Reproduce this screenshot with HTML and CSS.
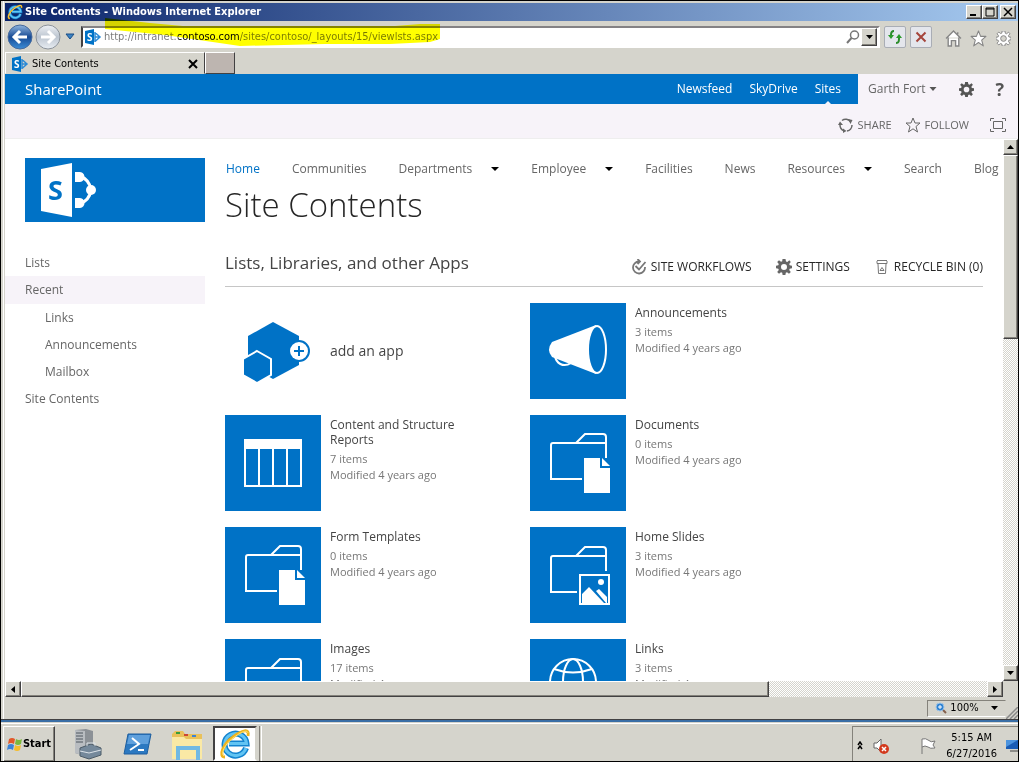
FILE: index.html
```html
<!DOCTYPE html>
<html lang="en">
<head>
    <meta charset="UTF-8">
    <meta name="viewport" content="width=device-width, initial-scale=1.0">
    <title>Site Contents</title>
    <link rel="stylesheet" href="styles.css">
</head>
<body>
    <svg class="sprite" aria-hidden="true">
        <symbol id="sp" viewBox="0 0 18 18">
            <path d="M1 3L10 1V17L1 15Z" fill="#0072c6"/>
            <text x="3" y="13" class="sp-letter">S</text>
            <path d="M11 4.500L16 9L11 13.500M11 9H15M11 4V14" fill="none" stroke="#2b8ad6" stroke-width="1.500"/>
        </symbol>
        <symbol id="ie" viewBox="0 0 32 32">
            <path d="M27 20A11 11 0 1 1 27.500 15.500H10" fill="none" stroke="#1484cf" stroke-width="6"/>
            <path d="M27 20A11 11 0 1 1 27.500 15.500H10" fill="none" stroke="#62c4f3" stroke-width="3"/>
            <path d="M6 29C-1 29 4 16 14 9C23 2 31 0 29 8" fill="none" stroke="#f0b41c" stroke-width="3"/>
            <path d="M5 28C1 26 6 16 14 10C22 4 28 1 29 5" fill="none" stroke="#fbe276" stroke-width="1"/>
        </symbol>
        <symbol id="gear" viewBox="0 0 16 16">
            <path fill-rule="evenodd" d="M6.500 0H9.500L10 2.500L11.300 3L13.300 1.300L14.800 3L13.200 5L13.700 6.300L16 6.700V9.300L13.700 9.800L13.200 11L14.800 13L13 14.800L11 13.300L9.800 13.800L9.400 16H6.600L6.200 13.800L5 13.300L3 14.800L1.200 13L2.800 11L2.300 9.800L0 9.300V6.700L2.300 6.300L2.800 5L1.200 3L3 1.200L5 2.800L6.200 2.300ZM8 5A3 3 0 1 0 8 11A3 3 0 1 0 8 5Z"/>
        </symbol>
        <symbol id="star" viewBox="0 0 16 16">
            <path d="M8 1L10 6H15L11 9.500L12.500 15L8 11.800L3.500 15L5 9.500L1 6H6Z" stroke-linejoin="round"/>
        </symbol>
        <symbol id="folder" viewBox="0 0 96 96">
            <path d="M52 64H21V30A2 2 0 0 1 23 28H76M46 28L55 19H73A3 3 0 0 1 76 22V43" fill="none" stroke="#fff" stroke-width="2"/>
        </symbol>
        <symbol id="folder-doc" viewBox="0 0 96 96">
            <use href="#folder"/>
            <path d="M54 43H70V53H80V78H54ZM72 43L80 51H72Z" fill="#fff"/>
        </symbol>
        <symbol id="folder-pic" viewBox="0 0 96 96">
            <use href="#folder" y="1"/>
            <path d="M47 45H82V80H47Z" fill="#0072c6"/>
            <path d="M50 48H79V77H50Z" fill="none" stroke="#fff" stroke-width="2"/>
            <circle cx="71" cy="55" r="3" fill="#fff"/>
            <path d="M52 67L59 60L74 76H52ZM66 64L69 62L77 70V76H76Z" fill="#fff"/>
        </symbol>
    </svg>

    <div class="desktop">
        <div class="window">
            <header class="titlebar">
                <svg class="icon16"><use href="#ie"/></svg>
                <span class="titlebar-text">Site Contents - Windows Internet Explorer</span>
                <div class="window-buttons">
                    <button class="bevel" aria-label="Minimize"><svg viewBox="0 0 12 10"><path d="M2 8H8" stroke="#000" stroke-width="2"/></svg></button>
                    <button class="bevel" aria-label="Maximize"><svg viewBox="0 0 12 10"><path d="M2 1H10V9H2ZM2 2H10" fill="none" stroke="#000"/></svg></button>
                    <button class="bevel close" aria-label="Close"><svg viewBox="0 0 12 10"><path d="M2 1L10 9M10 1L2 9" stroke="#000" stroke-width="1.500"/></svg></button>
                </div>
            </header>

            <div class="toolbar">
                <div class="history">
                    <button aria-label="Back">
                        <svg viewBox="0 0 26 26">
                            <defs><linearGradient id="back" x2="0" y2="1"><stop offset="0" stop-color="#91b6df"/><stop offset=".5" stop-color="#174a94"/><stop offset="1" stop-color="#3c8ed8"/></linearGradient></defs>
                            <circle cx="13" cy="13" r="12" fill="url(#back)" stroke="#476a9c"/>
                            <path d="M20 13H8M13 7L7 13L13 19" fill="none" stroke="#fff" stroke-width="3"/>
                        </svg>
                    </button>
                    <button aria-label="Forward">
                        <svg viewBox="0 0 26 26">
                            <defs><linearGradient id="fwd" x2="0" y2="1"><stop offset="0" stop-color="#eef1f5"/><stop offset=".5" stop-color="#bcc5d0"/><stop offset="1" stop-color="#e9eef3"/></linearGradient></defs>
                            <circle cx="13" cy="13" r="12" fill="url(#fwd)" stroke="#8c939b"/>
                            <path d="M6 13H18M13 7L19 13L13 19" fill="none" stroke="#fff" stroke-width="3"/>
                        </svg>
                    </button>
                    <button class="history-menu" aria-label="Recent pages"><svg viewBox="0 0 10 8"><path d="M1 1H9L5 6Z" fill="#3b83c4" stroke="#1b4e86"/></svg></button>
                </div>
                <div class="address">
                    <svg class="icon18"><use href="#sp"/></svg>
                    <input type="text" class="address-input" aria-label="Address" value="http://intranet.contoso.com/sites/contoso/_layouts/15/viewlsts.aspx">
                    <button class="search-button" aria-label="Search"><svg viewBox="0 0 16 16"><circle cx="9.500" cy="6" r="4" fill="none" stroke="#777" stroke-width="1.500"/><path d="M6.500 9L2 14" stroke="#777" stroke-width="2"/></svg></button>
                    <button class="bevel address-menu" aria-label="Show addresses"><svg viewBox="0 0 7 4"><path d="M0 0H7L3.500 4Z"/></svg></button>
                    <svg class="marker" viewBox="0 0 335 29" aria-hidden="true"><path d="M0 0L45 5L78 8H290L315 6H335V21L325 24L285 26H220L135 28L60 17L0 11Z" fill="#ff0"/></svg>
                </div>
                <button class="nav-button" aria-label="Refresh"><svg viewBox="0 0 16 16"><path d="M7 2C4 2 4 4 4 6M9 14C12 14 12 12 12 9" fill="none" stroke="#2a8b2a" stroke-width="2"/><path d="M1 6H7L4 10ZM9 9H15L12 5Z" fill="#2a9a2a"/></svg></button>
                <button class="nav-button" aria-label="Stop"><svg viewBox="0 0 16 16"><path d="M3.500 3.500L12.500 12.500M12.500 3.500L3.500 12.500" stroke="#a5453c" stroke-width="2"/></svg></button>
                <div class="commands">
                    <button aria-label="Home"><svg viewBox="0 0 16 16"><path d="M1 8L8 1L15 8M3 7V15H6V10H10V15H13V7M12 4V2" fill="#fff" stroke="#858585" stroke-width="1.300"/></svg></button>
                    <button aria-label="Favorites"><svg viewBox="0 0 16 16" fill="#fff" stroke="#858585"><use href="#star" width="16" height="16"/></svg></button>
                    <button aria-label="Tools"><svg viewBox="-1 -1 18 18" fill="#fff" stroke="#858585"><use href="#gear" width="16" height="16"/></svg></button>
                </div>
            </div>

            <div class="tabs">
                <div class="tab">
                    <svg class="icon18"><use href="#sp"/></svg>
                    <span class="tab-title">Site Contents</span>
                    <button aria-label="Close tab"><svg viewBox="0 0 10 10"><path d="M1 1L9 9M9 1L1 9" stroke="#000" stroke-width="2"/></svg></button>
                </div>
                <button class="new-tab" aria-label="New tab"></button>
            </div>

            <div class="suitebar">
                <div class="suitebar-blue">
                    <a href="#" class="brand">SharePoint</a>
                    <nav class="suite-links">
                        <a href="#">Newsfeed</a>
                        <a href="#">SkyDrive</a>
                        <a href="#" class="current">Sites</a>
                    </nav>
                </div>
                <div class="suitebar-user">
                    <button class="user">Garth Fort <svg viewBox="0 0 7 4"><path d="M0 0H7L3.500 4Z"/></svg></button>
                    <button aria-label="Settings" class="suite-gear"><svg><use href="#gear"/></svg></button>
                    <button aria-label="Help" class="help">?</button>
                </div>
            </div>

            <div class="ribbon">
                <button><svg viewBox="0 0 16 16" fill="none" stroke="#666" stroke-width="1.500"><path d="M4 3.500A6 6 0 0 1 12.500 4.500M14 8A6 6 0 0 1 9 14M6 13.700A6 6 0 0 1 2 8"/><path d="M0 8L2 4.500L5 8ZM10 2L14.500 3L12.500 7ZM5 11.500L8.500 14L5 16Z" fill="#666" stroke="none"/></svg>SHARE</button>
                <button><svg viewBox="0 0 16 16" fill="none" stroke="#666"><use href="#star" width="16" height="16"/></svg>FOLLOW</button>
                <button class="focus" aria-label="Focus on content"><svg viewBox="0 0 16 16" fill="none" stroke="#666"><path d="M.5 4V1.500H4M12 1.500H15.500V4M.5 12V14.500H4M12 14.500H15.500V12M3.500 4.500H12.500V11.500H3.500Z"/></svg></button>
            </div>

            <div class="viewport">
                <div class="page">
                    <aside class="sidebar">
                        <a href="#" class="logo" aria-label="Site home">
                            <svg viewBox="0 0 180 64">
                                <path d="M16 11L47 5V59L16 53Z" fill="#fff"/>
                                <text x="23" y="42" class="logo-letter">S</text>
                                <path d="M50 18H54C61 20 65 25 66 32C65 39 61 44 54 46H50" fill="none" stroke="#fff" stroke-width="3"/>
                                <path d="M50 14H54A5 5 0 0 1 55 24H50ZM50 40H54A5 5 0 0 1 55 50H50Z" fill="#fff"/>
                                <circle cx="66" cy="32" r="5" fill="#fff"/>
                            </svg>
                        </a>
                        <nav class="side-links">
                            <a href="#">Lists</a>
                            <a href="#" class="selected">Recent</a>
                            <a href="#" class="sub">Links</a>
                            <a href="#" class="sub">Announcements</a>
                            <a href="#" class="sub">Mailbox</a>
                            <a href="#">Site Contents</a>
                        </nav>
                    </aside>

                    <main>
                        <nav class="topnav">
                            <a href="#" class="active">Home</a>
                            <a href="#">Communities</a>
                            <a href="#" class="has-menu">Departments</a>
                            <a href="#" class="has-menu">Employee</a>
                            <a href="#">Facilities</a>
                            <a href="#">News</a>
                            <a href="#" class="has-menu">Resources</a>
                            <a href="#">Search</a>
                            <a href="#">Blog</a>
                        </nav>
                        <h1>Site Contents</h1>
                        <div class="section-head">
                            <h2>Lists, Libraries, and other Apps</h2>
                            <div class="actions">
                                <a href="#"><svg viewBox="0 0 16 16" fill="none" stroke="#777" stroke-width="1.800"><path d="M8 2.500A6 6 0 1 0 14 8M4.500 7L8 10.500L14.500 3M6.500 0L9 2.500L6.500 5"/></svg>SITE WORKFLOWS</a>
                                <a href="#"><svg fill="#666"><use href="#gear"/></svg>SETTINGS</a>
                                <a href="#"><svg viewBox="0 0 16 16" fill="none" stroke="#777"><path d="M3 1.500H13M3 2V4.500H13V2M4 5L4.500 14.500H11.500L12 5M6 11.500H10L8 8.500Z"/></svg>RECYCLE BIN (0)</a>
                            </div>
                        </div>

                        <ul class="apps">
                            <li class="app add">
                                <svg class="tile" viewBox="0 0 96 96">
                                    <path d="M48 19L74 33V62L48 76L23 62V33Z" fill="#0072c6"/>
                                    <path d="M32 48L46 56V72L32 80L18 72V56Z" fill="#0072c6" stroke="#fff" stroke-width="2"/>
                                    <circle cx="74" cy="48" r="9" fill="#fff"/>
                                    <path d="M74 38A10 10 0 0 1 74 58" fill="none" stroke="#0072c6" stroke-width="2"/>
                                    <path d="M69 48H79M74 43V53" stroke="#0072c6" stroke-width="2"/>
                                </svg>
                                <a href="#">add an app</a>
                            </li>
                            <li class="app">
                                <svg class="tile" viewBox="0 0 96 96">
                                    <path d="M25 53C26 60 33 65 41 60" fill="none" stroke="#fff" stroke-width="2"/>
                                    <path d="M66 22L22 39Q16 47 22 54L66 71Z" fill="#fff"/>
                                    <ellipse cx="67" cy="46.500" rx="9" ry="23.500" fill="#0072c6" stroke="#fff" stroke-width="2"/>
                                </svg>
                                <div class="app-text"><a href="#">Announcements</a><p>3 items</p><p>Modified 4 years ago</p></div>
                            </li>
                            <li class="app">
                                <svg class="tile" viewBox="0 0 96 96"><path fill-rule="evenodd" fill="#fff" d="M19 24H77V72H19ZM21 34V70H33V34ZM35 34V70H47V34ZM49 34V70H61V34ZM63 34V70H75V34Z"/></svg>
                                <div class="app-text"><a href="#">Content and Structure Reports</a><p>7 items</p><p>Modified 4 years ago</p></div>
                            </li>
                            <li class="app">
                                <svg class="tile"><use href="#folder-doc"/></svg>
                                <div class="app-text"><a href="#">Documents</a><p>0 items</p><p>Modified 4 years ago</p></div>
                            </li>
                            <li class="app">
                                <svg class="tile"><use href="#folder-doc"/></svg>
                                <div class="app-text"><a href="#">Form Templates</a><p>0 items</p><p>Modified 4 years ago</p></div>
                            </li>
                            <li class="app">
                                <svg class="tile"><use href="#folder-pic"/></svg>
                                <div class="app-text"><a href="#">Home Slides</a><p>3 items</p><p>Modified 4 years ago</p></div>
                            </li>
                            <li class="app">
                                <svg class="tile"><use href="#folder-pic"/></svg>
                                <div class="app-text"><a href="#">Images</a><p>17 items</p><p>Modified 4 years ago</p></div>
                            </li>
                            <li class="app">
                                <svg class="tile" viewBox="0 0 96 96" fill="none" stroke="#fff" stroke-width="2"><circle cx="43" cy="43" r="23"/><ellipse cx="43" cy="43" rx="10" ry="23"/><path d="M24 30Q43 37 62 30M20 43H66"/></svg>
                                <div class="app-text"><a href="#">Links</a><p>3 items</p><p>Modified 4 years ago</p></div>
                            </li>
                        </ul>
                    </main>
                </div>

                <div class="scroll-v">
                    <button class="bevel" aria-label="Scroll up"><svg viewBox="0 0 7 4"><path d="M0 4H7L3.500 0Z"/></svg></button>
                    <div class="thumb bevel"></div>
                    <button class="bevel" aria-label="Scroll down"><svg viewBox="0 0 7 4"><path d="M0 0H7L3.500 4Z"/></svg></button>
                </div>
            </div>

            <div class="scroll-h">
                <button class="bevel" aria-label="Scroll left"><svg viewBox="0 0 4 7"><path d="M4 0V7L0 3.500Z"/></svg></button>
                <div class="scroll-h-track"><div class="thumb bevel"></div></div>
                <button class="bevel" aria-label="Scroll right"><svg viewBox="0 0 4 7"><path d="M0 0V7L4 3.500Z"/></svg></button>
            </div>

            <footer class="statusbar">
                <button class="zoom">
                    <svg class="zoom-icon" viewBox="0 0 12 12"><path d="M7 7L11 11" stroke="#84604d" stroke-width="2"/><circle cx="5" cy="5" r="4" fill="#2e82d2" stroke="#9dc3e6"/><path d="M3 5H7M5 3V7" stroke="#fff"/></svg>
                    <span>100%</span>
                    <svg class="zoom-arrow" viewBox="0 0 7 4"><path d="M0 0H7L3.500 4Z"/></svg>
                </button>
                <svg class="grip" viewBox="0 0 12 12"><path d="M0 12L12 0M4 12L12 4M8 12L12 8" stroke="#888" stroke-width="1.500"/></svg>
            </footer>
        </div>

        <div class="taskbar">
            <button class="start bevel">
                <svg viewBox="0 0 16 16"><path d="M2 3Q5 1 8 3L7 8Q4 6 1 8Z" fill="#e2582a"/><path d="M9 3Q12 5 15 3L14 8Q11 10 8 8Z" fill="#7bb83c"/><path d="M1 9Q4 7 7 9L6 14Q3 12 0 14Z" fill="#3d83d6"/><path d="M8 9Q11 11 14 9L13 14Q10 16 7 14Z" fill="#f5bd2c"/></svg>
                Start
            </button>
            <div class="launchers">
                <button aria-label="Server Manager"><svg viewBox="0 0 32 32"><path d="M4 2L15 1L22 3V25L14 28L4 25Z" fill="#8c9196"/><path d="M4 2L14 3V28L4 25Z" fill="#b9bdc1"/><path d="M5 5H12M5 8H12M5 11H12M5 14H12" stroke="#4f565e"/><path d="M9 20L20 16L30 20V27L18 31L9 28Z" fill="#75899b" stroke="#4d5c68"/><path d="M16 18V15H24V18M9 23L18 25L30 22" fill="none" stroke="#dde4ea"/></svg></button>
                <button aria-label="Windows PowerShell"><svg viewBox="0 0 32 32"><path d="M7 6H30L26 26H3Z" fill="#2c79c1" stroke="#1f5f9f"/><path d="M8 7H29L27 16H6Z" fill="#5fa0dc"/><path d="M11 10L18 16L9 22M17 22H23" fill="none" stroke="#fff" stroke-width="2"/></svg></button>
                <button aria-label="Windows Explorer"><svg viewBox="0 0 32 32"><path d="M1 6L4 3H12L14 6H31V31H1Z" fill="#e9c15a"/><path d="M5 4H9V6H5Z" fill="#3a9d3a"/><path d="M13 6H17V8H13Z" fill="#cd4635"/><path d="M21 7H25V9H21Z" fill="#3d83d6"/><path d="M1 9H13L15 11H31V31H1Z" fill="#fae9a5"/><path d="M7 32V20H27V32" fill="none" stroke="#71b9e3" stroke-width="4"/></svg></button>
                <button class="running" aria-label="Internet Explorer"><svg viewBox="0 0 32 32"><use href="#ie"/></svg></button>
                <span class="divider"></span>
            </div>
            <div class="tray">
                <button aria-label="Show hidden icons"><svg class="chevrons" viewBox="0 0 6 9" fill="none" stroke="#000" stroke-width="1.500"><path d="M1 4L3 1L5 4M1 8L3 5L5 8"/></svg></button>
                <button aria-label="Volume"><svg viewBox="0 0 18 18"><path d="M2 6H5L9 2V15L5 11H2Z" fill="#fff" stroke="#666"/><circle cx="12" cy="12" r="5" fill="#d33a1e"/><path d="M10 10L14 14M14 10L10 14" stroke="#fff" stroke-width="1.500"/></svg></button>
                <button class="flag" aria-label="Action Center"><svg viewBox="0 0 18 18"><path d="M3 17V2Q7 1 9 3Q12 6 16 4L14 8L16 11Q11 12 9 10Q6 8 3 10" fill="#fff" stroke="#777"/></svg></button>
                <time class="clock" datetime="2016-06-27T05:15">5:15 AM<br>6/27/2016</time>
                <button class="screen" aria-label="Show desktop"><svg viewBox="0 0 12 14"><path d="M0 1H12V10H0Z" fill="#1b5db5"/><path d="M0 1H12L0 8Z" fill="#4d94de"/><path d="M4 12H12" stroke="#444"/></svg></button>
            </div>
        </div>
    </div>
</body>
</html>
```

FILE: styles.css
```css
:root {
    --blue: #0072c6;
    --chrome: #d5d4cc;
    --pale: #f7f3f9;
    --text: #444;
    --muted: #666;
    --dark-edge: #424142;
    --segoe: "Open Sans", "Noto Sans", sans-serif;
    --tahoma: "DejaVu Sans Condensed", "DejaVu Sans", sans-serif;
}

* {
    margin: 0;
    padding: 0;
    box-sizing: border-box;
}

body {
    font-family: var(--segoe);
    font-size: 12px;
    line-height: 16px;
    color: var(--text);
    background: #000;
}

a {
    color: inherit;
    text-decoration: none;
}

button {
    display: flex;
    align-items: center;
    justify-content: center;
    font: inherit;
    color: inherit;
    background: none;
    border: none;
}

svg {
    display: block;
    flex: none;
}

.sprite {
    display: none;
}

.sp-letter {
    font: bold 10px var(--segoe);
    fill: #fff;
}

.icon16 {
    width: 16px;
    height: 16px;
}

.icon18 {
    width: 18px;
    height: 18px;
}

.bevel {
    background: var(--chrome);
    border: 1px solid;
    border-color: #fff var(--dark-edge) var(--dark-edge) #fff;
    box-shadow: inset -1px -1px #84827b;
}

.desktop {
    display: flex;
    flex-direction: column;
    height: 100vh;
    padding: 1px;
    background: #000;
}

/* browser window */
.window {
    flex: 1;
    min-height: 0;
    display: flex;
    flex-direction: column;
    background: var(--chrome);
    padding: 2px 0 0 4px;
    box-shadow: inset 2px 0 var(--chrome), inset 3px 0 #fff;
    border-bottom: 1px solid var(--dark-edge);
}

.titlebar {
    display: flex;
    align-items: center;
    gap: 2px;
    height: 18px;
    padding: 0 2px;
    background: linear-gradient(to right, #0a246a, #a6caf0);
    color: #fff;
    font: bold 11px/16px var(--tahoma);
}

.titlebar-text {
    flex: 1;
}

.window-buttons {
    display: flex;
}

.window-buttons button {
    width: 16px;
    height: 14px;
}

.window-buttons svg {
    width: 12px;
    height: 10px;
}

.window-buttons .close {
    margin-left: 2px;
}

.toolbar {
    display: flex;
    align-items: center;
    height: 31px;
    padding-right: 6px;
}

.history {
    display: flex;
    align-items: center;
    padding-left: 2px;
    width: 76px;
}

.history button svg {
    width: 26px;
    height: 26px;
}

.history button + button {
    margin-left: 2px;
}

.history .history-menu {
    margin-left: 4px;
}

.history .history-menu svg {
    width: 10px;
    height: 8px;
}

.address {
    position: relative;
    flex: 1;
    display: flex;
    align-items: center;
    height: 22px;
    padding: 0 1px;
    background: #fff;
    border: 2px solid;
    border-color: #848284 #fff #fff #424142;
}

.address-input {
    flex: 1;
    min-width: 0;
    height: 18px;
    padding-left: 2px;
    border: none;
    outline: none;
    font: 11px/16px var(--tahoma);
    /* greys out everything but the host name */
    color: transparent;
    background: linear-gradient(to right, #777 76px, #000 76px, #000 137px, #777 137px);
    background-clip: text;
    -webkit-background-clip: text;
}

.search-button svg {
    width: 16px;
    height: 16px;
}

.address-menu {
    width: 16px;
    height: 18px;
}

.address-menu svg {
    width: 7px;
    height: 4px;
}

/* highlighter stroke over the address */
.marker {
    position: absolute;
    left: 22px;
    top: -10px;
    width: 335px;
    height: 29px;
    mix-blend-mode: multiply;
    pointer-events: none;
}

.nav-button {
    width: 22px;
    height: 22px;
    margin-left: 4px;
    background: #e4e6ec;
    border: 1px solid #a9adb5;
    border-radius: 2px;
}

.nav-button svg {
    width: 16px;
    height: 16px;
}

.commands {
    display: flex;
    gap: 8px;
    margin-left: 13px;
    padding-top: 3px;
}

.commands svg {
    width: 17px;
    height: 17px;
}

.tabs {
    display: flex;
    height: 22px;
    font: 11px/16px var(--tahoma);
    color: #000;
}

.tab {
    display: flex;
    align-items: center;
    gap: 3px;
    width: 200px;
    padding: 2px 6px 0 5px;
    border: 1px solid;
    border-color: #fff var(--dark-edge) transparent #fff;
}

.tab-title {
    flex: 1;
}

.tab button svg {
    width: 10px;
    height: 10px;
}

.new-tab {
    width: 30px;
    background: #bdb5b0;
    border: 1px solid;
    border-color: #fff var(--dark-edge) var(--dark-edge) #fff;
}

/* SharePoint suite bar */
.suitebar {
    display: flex;
    height: 30px;
    flex: none;
    background: var(--pale);
}

.suitebar-blue {
    flex: 1;
    display: flex;
    align-items: center;
    justify-content: space-between;
    padding: 0 17px 0 20px;
    background: var(--blue);
    color: #fff;
}

.brand {
    font-size: 15px;
}

.suite-links {
    display: flex;
    gap: 17px;
    height: 30px;
    line-height: 30px;
}

.current {
    position: relative;
}

.current::after {
    content: "";
    position: absolute;
    left: 50%;
    bottom: 0;
    margin-left: -3px;
    border: 3px solid transparent;
    border-top: none;
    border-bottom-color: var(--pale);
}

.suitebar-user {
    display: flex;
    align-items: center;
    justify-content: space-between;
    width: 160px;
    padding: 0 14px 0 10px;
    color: var(--muted);
    fill: #555;
}

.user {
    gap: 3px;
}

.user svg {
    width: 8px;
    height: 4px;
}

.suite-gear svg {
    width: 15px;
    height: 15px;
}

.help {
    font-size: 18px;
    font-weight: bold;
    color: #555;
}

.ribbon {
    display: flex;
    align-items: center;
    justify-content: flex-end;
    gap: 13px;
    height: 35px;
    flex: none;
    padding: 8px 12px 0 0;
    background: var(--pale);
    border-bottom: 1px solid #eee;
    color: var(--muted);
    font-size: 11px;
}

.ribbon button {
    gap: 4px;
}

.ribbon svg {
    width: 16px;
    height: 16px;
}

.ribbon .focus {
    margin-left: 8px;
}

/* page area */
.viewport {
    flex: 1;
    min-height: 0;
    display: flex;
    background: #fff;
}

.page {
    flex: 1;
    min-width: 0;
    display: flex;
    gap: 20px;
    padding: 19px 20px 0 0;
    overflow: hidden;
}

.sidebar {
    width: 200px;
    flex: none;
}

.logo {
    display: block;
    height: 64px;
    margin: 0 0 27px 20px;
    background: var(--blue);
}

.logo svg {
    width: 180px;
    height: 64px;
}

.logo-letter {
    font: bold 27px var(--segoe);
    fill: var(--blue);
}

.side-links a {
    display: block;
    padding-left: 20px;
    line-height: 27px;
    color: var(--muted);
}

.side-links .sub {
    padding-left: 40px;
}

.side-links .selected {
    line-height: 28px;
    background: var(--pale);
}

main {
    flex: 1;
    min-width: 0;
}

.topnav {
    display: flex;
    gap: 32px;
    padding: 3px 0 0 1px;
    color: var(--muted);
    white-space: nowrap;
}

.topnav .active {
    color: var(--blue);
}

.has-menu {
    display: flex;
    align-items: center;
    gap: 19px;
}

.has-menu::after {
    content: "";
    border: 4px solid transparent;
    border-top-color: #000;
    border-bottom: none;
}

h1 {
    font-size: 33px;
    line-height: 48px;
    font-weight: 300;
    color: #262626;
    margin-top: 4px;
}

.section-head {
    display: flex;
    align-items: center;
    justify-content: space-between;
    height: 48px;
    margin-top: 10px;
    border-bottom: 1px solid #c6c6c6;
    white-space: nowrap;
}

h2 {
    font-size: 17px;
    line-height: 24px;
    font-weight: normal;
}

.actions {
    display: flex;
    gap: 24px;
    padding-top: 8px;
    color: #262626;
}

.actions a {
    display: flex;
    gap: 4px;
}

.actions svg {
    width: 16px;
    height: 16px;
}

.apps {
    display: grid;
    grid-template-columns: repeat(auto-fill, 289px);
    gap: 16px;
    margin-top: 16px;
    list-style: none;
}

.app {
    display: flex;
    gap: 9px;
}

.tile {
    width: 96px;
    height: 96px;
    background: var(--blue);
}

.add {
    align-items: center;
    font-size: 14px;
}

.add .tile {
    background: none;
}

.app-text {
    width: 150px;
    padding-top: 2px;
    line-height: 15px;
}

.app-text a {
    display: block;
    margin-bottom: 4px;
}

.app-text p {
    font-size: 11px;
    line-height: 16px;
    color: #777;
}

/* scrollbars */
.scroll-v,
.scroll-h-track {
    background: repeating-conic-gradient(#d5d4cc 0 25%, #fff 0 50%) 0 0 / 2px 2px;
}

.scroll-v {
    display: flex;
    flex-direction: column;
    width: 15px;
}

.scroll-v button {
    height: 16px;
    flex: none;
}

.scroll-v button:last-child {
    margin-top: auto;
}

.scroll-v svg {
    width: 7px;
    height: 4px;
}

.scroll-v .thumb {
    height: 34%;
}

.scroll-h {
    display: flex;
    height: 16px;
    flex: none;
    padding-right: 15px;
}

.scroll-h button {
    width: 16px;
}

.scroll-h svg {
    width: 4px;
    height: 7px;
}

.scroll-h-track {
    flex: 1;
}

.scroll-h .thumb {
    width: 77.4%;
    height: 16px;
}

.statusbar {
    display: flex;
    align-items: center;
    justify-content: flex-end;
    height: 22px;
    flex: none;
    font: 11px/16px var(--tahoma);
    color: #000;
}

.zoom {
    gap: 3px;
    height: 17px;
    width: 79px;
    border: 1px solid;
    border-color: #84827b transparent #fff #84827b;
}

.zoom-icon {
    width: 12px;
    height: 12px;
}

.zoom-arrow {
    width: 7px;
    height: 4px;
    margin-left: 9px;
}

.grip {
    width: 12px;
    height: 12px;
    align-self: flex-end;
}

/* taskbar */
.taskbar {
    display: flex;
    align-items: stretch;
    height: 41px;
    padding: 4px 0 0 2px;
    background: var(--chrome);
    border-top: 2px solid #3a6ea5;
    box-shadow: inset 0 1px var(--chrome), inset 0 2px #fff;
    color: #000;
}

.start {
    width: 52px;
    border-bottom: none;
    font: bold 11px/16px var(--tahoma);
}

.start svg {
    width: 16px;
    height: 16px;
}

.launchers {
    flex: 1;
    display: flex;
    gap: 18px;
    padding-left: 16px;
}

.launchers button {
    width: 32px;
}

.launchers svg {
    width: 32px;
    height: 32px;
}

.launchers .running {
    width: 44px;
    margin-left: -8px;
    background: #fff;
    border: 2px solid;
    border-color: #424142 #d5d4cc #fff #424142;
}

.divider {
    width: 3px;
    margin-left: -16px;
    border-left: 1px solid #84827b;
    border-right: 1px solid #fff;
}

.tray {
    display: flex;
    align-items: center;
    gap: 9px;
    padding: 3px 0 0 4px;
    border-top: 1px solid #84827b;
    border-left: 1px solid #84827b;
    font: 11px/16px var(--tahoma);
}

.tray svg {
    width: 18px;
    height: 18px;
}

.tray .chevrons {
    width: 6px;
    height: 9px;
}

.flag {
    margin-left: 20px;
}

.clock {
    text-align: center;
}

.tray .screen svg {
    width: 12px;
    height: 14px;
}
```
